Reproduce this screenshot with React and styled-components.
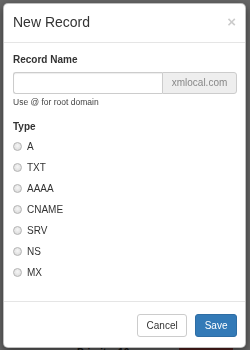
import styled, { createGlobalStyle } from "styled-components";

const types = ["A", "TXT", "AAAA", "CNAME", "SRV", "NS", "MX"];

const Global = createGlobalStyle`
  html, body {
    margin: 0;
    height: 100%;
    overflow: hidden;
    background: #fff;
    font-family: "Liberation Sans", Arial, sans-serif;
    color: #333;
  }
  * { box-sizing: border-box; }
`;

export default function App() {
  return (
    <>
      <Global />
      <Page>
        <BehindRow>
          <Priority>Priority: 10</Priority>
          <DangerBtn />
        </BehindRow>
      </Page>
      <Backdrop>
        <Dialog>
          <Header>
            <Title>New Record</Title>
            <Close>×</Close>
          </Header>
          <Body>
            <Label>Record Name</Label>
            <InputGroup>
              <TextInput type="text" />
              <Addon>xmlocal.com</Addon>
            </InputGroup>
            <Help>Use @ for root domain</Help>
            <TypeLabel>Type</TypeLabel>
            <RadioList>
              {types.map((t) => (
                <RadioRow key={t}>
                  <Radio type="radio" name="type" value={t} />
                  <span>{t}</span>
                </RadioRow>
              ))}
            </RadioList>
          </Body>
          <Footer>
            <Button>Cancel</Button>
            <Button $primary>Save</Button>
          </Footer>
        </Dialog>
      </Backdrop>
    </>
  );
}

const Page = styled.div`
  padding-top: 346px;
`;

const BehindRow = styled.div`
  display: flex;
  align-items: flex-start;
  padding-left: 77px;
  gap: 50px;
`;

const Priority = styled.span`
  font-size: 10px;
  font-weight: bold;
  line-height: 14px;
`;

const DangerBtn = styled.span`
  width: 54px;
  height: 20px;
  margin-top: 1px;
  background: #d9534f;
`;

const Backdrop = styled.div`
  position: fixed;
  inset: 0;
  background: rgba(0, 0, 0, 0.6);
  padding: 3px 4px 0 3px;
`;

const Dialog = styled.div`
  width: 243px;
  background: #fff;
  border: 1px solid rgba(0, 0, 0, 0.25);
  border-radius: 5px;
  box-shadow: 0 3px 9px rgba(0, 0, 0, 0.5);
`;

const Header = styled.div`
  height: 39px;
  display: flex;
  align-items: center;
  justify-content: space-between;
  padding: 0 9px 3px 9px;
  border-bottom: 1px solid #e5e5e5;
`;

const Title = styled.h4`
  margin: 0;
  font-size: 14px;
  font-weight: normal;
  line-height: 18px;
`;

const Close = styled.span`
  font-size: 15px;
  font-weight: bold;
  line-height: 1;
  color: #000;
  opacity: 0.2;
`;

const Body = styled.div`
  padding: 10px 8px 18px 9px;
  font-size: 10px;
  line-height: 14px;
`;

const Label = styled.div`
  font-weight: bold;
  margin-bottom: 5px;
`;

const InputGroup = styled.div`
  display: flex;
  height: 22px;
`;

const TextInput = styled.input`
  flex: 1;
  min-width: 0;
  height: 22px;
  border: 1px solid #ccc;
  border-right: 0;
  border-radius: 3px 0 0 3px;
  box-shadow: inset 0 1px 1px rgba(0, 0, 0, 0.075);
  outline: none;
`;

const Addon = styled.span`
  width: 75px;
  display: flex;
  align-items: center;
  justify-content: center;
  background: #eee;
  border: 1px solid #ccc;
  border-radius: 0 3px 3px 0;
  color: #888;
  font-size: 10px;
`;

const Help = styled.div`
  margin-top: 2px;
  font-size: 8.5px;
  line-height: 12px;
  color: #444;
`;

const TypeLabel = styled.div`
  font-weight: bold;
  margin-top: 12px;
`;

const RadioList = styled.div`
  margin-top: 2px;
  display: flex;
  flex-direction: column;
`;

const RadioRow = styled.label`
  height: 21px;
  display: flex;
  align-items: center;
  gap: 5px;
`;

const Radio = styled.input`
  appearance: none;
  margin: 0;
  width: 9px;
  height: 9px;
  border-radius: 50%;
  border: 1px solid #b4b4b4;
  background: radial-gradient(circle at 50% 40%, #f6f6f6, #d6d6d6);
`;

const Footer = styled.div`
  display: flex;
  justify-content: flex-end;
  gap: 8px;
  padding: 12px 8px 10px 9px;
  border-top: 1px solid #e5e5e5;
`;

const Button = styled.button`
  height: 23px;
  padding: 0 8.5px;
  font-family: inherit;
  font-size: 10px;
  border-radius: 3px;
  border: 1px solid ${(p) => (p.$primary ? "#2e6da4" : "#ccc")};
  background: ${(p) => (p.$primary ? "#337ab7" : "#fff")};
  color: ${(p) => (p.$primary ? "#fff" : "#333")};
`;
